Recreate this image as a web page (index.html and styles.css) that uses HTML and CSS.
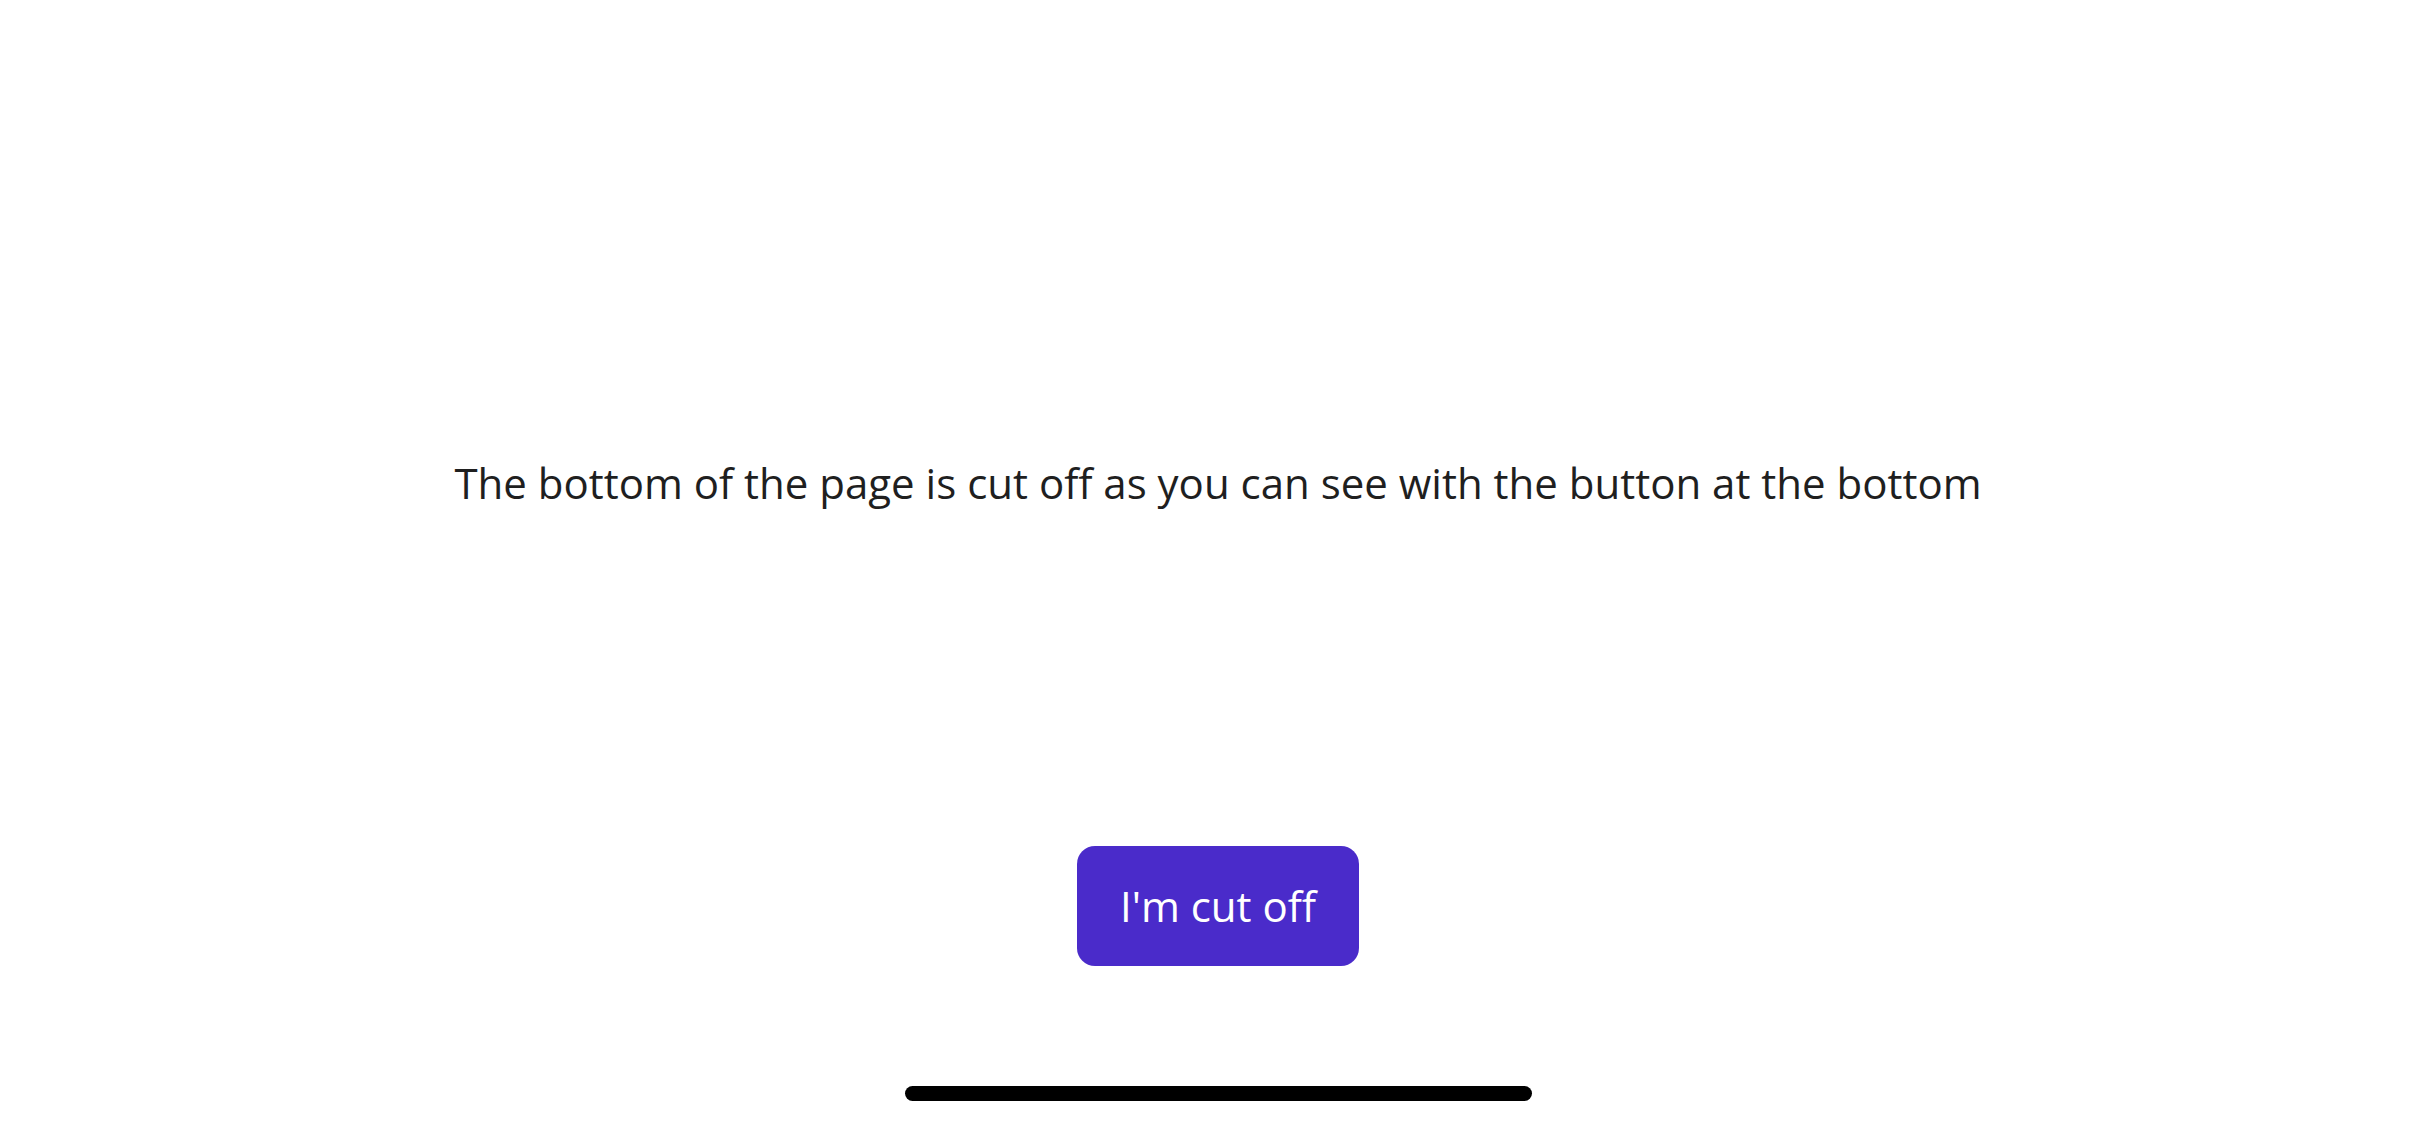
FILE: index.html
```html
<!DOCTYPE html>
<html lang="en">
<head>
<meta charset="utf-8">
<title>Cut off</title>
<link rel="stylesheet" href="styles.css">
</head>
<body>
<div class="screen">
  <p class="message">The bottom of the page is cut off as you can see with the button at the bottom</p>
  <button class="action" type="button">I'm cut off</button>
  <div class="home-indicator"></div>
</div>
</body>
</html>
```

FILE: styles.css
```css
html, body {
  margin: 0;
  padding: 0;
  background: #ffffff;
}

.screen {
  width: 2436px;
  height: 1125px;
  display: flex;
  flex-direction: column;
  align-items: center;
  font-family: "Open Sans", "Noto Sans", sans-serif;
  overflow: hidden;
}

.message {
  margin: 453px 0 0 0;
  font-size: 42px;
  line-height: 60px;
  color: #1f1f1f;
  text-align: center;
}

.action {
  margin-top: 333px;
  width: 282px;
  height: 120px;
  border: none;
  border-radius: 18px;
  background: #4a2bca;
  color: #ffffff;
  font-family: "Open Sans", "Noto Sans", sans-serif;
  font-size: 42px;
  line-height: 60px;
  padding: 0;
}

.home-indicator {
  margin-top: 120px;
  width: 627px;
  height: 15px;
  border-radius: 8px;
  background: #000000;
}
```
